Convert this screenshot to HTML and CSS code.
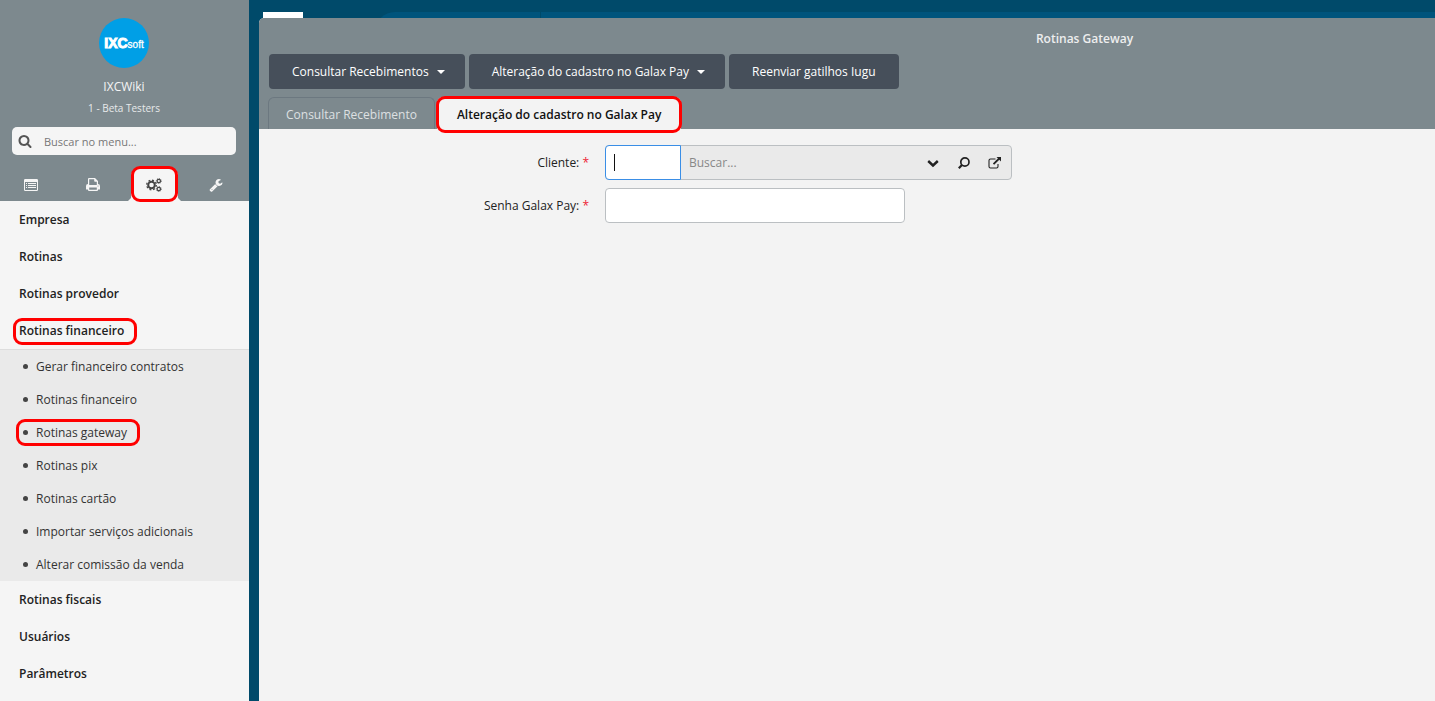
FILE: index.html
```html
<!DOCTYPE html>
<html lang="pt-BR">
<head>
<meta charset="utf-8">
<title>Rotinas Gateway</title>
<link rel="stylesheet" href="styles.css">
</head>
<body>
<div class="app">
  <aside class="sidebar">
    <header class="profile">
      <div class="logo"><span class="logo-main">IXC</span><span class="logo-sub">soft</span></div>
      <div class="user-name">IXCWiki</div>
      <div class="user-org">1 - Beta Testers</div>
      <label class="menu-search">
        <svg width="14" height="14" viewBox="0 0 1792 1792" fill="currentColor" aria-hidden="true"><path d="M1216 832q0-185-131.500-316.500t-316.500-131.500-316.500 131.500-131.500 316.500 131.500 316.500 316.500 131.500 316.500-131.500 131.500-316.500zm512 832q0 52-38 90t-90 38q-54 0-90-38l-343-342q-179 124-399 124-143 0-273.500-55.500t-225-150-150-225-55.500-273.500 55.500-273.500 150-225 225-150 273.500-55.500 273.500 55.500 225 150 150 225 55.500 273.500q0 220-124 399l343 343q37 37 37 90z"/></svg>
        <input type="text" placeholder="Buscar no menu..." aria-label="Buscar no menu">
      </label>
      <nav class="side-tabs">
        <button class="side-tab" aria-label="Cadastros"><svg width="14" height="12" viewBox="0 0 14 12" fill="currentColor"><path fill-rule="evenodd" d="M1.200 0h11.600Q14 0 14 1.200v9.600Q14 12 12.800 12H1.200Q0 12 0 10.800V1.200Q0 0 1.200 0zM1 3v7.500q0 .5.500.5h11q.5 0 .5-.5V3z"/><path d="M2 4h1v1H2zM4 4h8v1H4zM2 6h1v1H2zM4 6h8v1H4zM2 8h1v1H2zM4 8h8v1H4z"/></svg></button>
        <button class="side-tab" aria-label="Imprimir"><svg width="14" height="13" viewBox="0 0 14 13" fill="currentColor"><path fill-rule="evenodd" d="M2 6V1q0-1 1-1h6l3 3v3q2 0 2 2v3.300q0 .2-.3.200H12V12q0 1-1 1H3q-1 0-1-1v-.5H.300Q0 11.500 0 11.300V8q0-2 2-2zM3.200 1.200V7h7.600V3.800H9q-.8 0-.8-.8V1.200zM3.200 9.500v2.300h7.600V9.500zM12 7.500a.5.500 0 1 0 0 1 .5.500 0 1 0 0-1z"/></svg></button>
        <button class="side-tab side-tab-active marked" aria-label="Rotinas"><svg width="16" height="14" viewBox="0 0 16 14" fill="none" stroke="currentColor"><circle cx="5.500" cy="7" r="3.300" stroke-width="2"/><circle cx="5.500" cy="7" r="4.800" stroke-width="1.300" stroke-dasharray="1.900 1.870"/><circle cx="12.800" cy="3" r="1.700" stroke-width="1.200"/><circle cx="12.800" cy="3" r="2.500" stroke-width=".8" stroke-dasharray="1 .960"/><circle cx="12.800" cy="11" r="1.700" stroke-width="1.200"/><circle cx="12.800" cy="11" r="2.500" stroke-width=".8" stroke-dasharray="1 .960"/></svg></button>
        <button class="side-tab" aria-label="Ferramentas"><svg width="14" height="14" viewBox="0 0 1792 1792" fill="currentColor"><path d="M448 1472q0-26-19-45t-45-19-45 19-19 45 19 45 45 19 45-19 19-45zm644-420l-682 682q-37 37-90 37-52 0-91-37l-106-108q-38-36-38-90 0-53 38-91l681-681q39 98 114.500 173.500t173.500 114.500zm634-435q0 39-23 106-47 134-164.500 217.500t-258.500 83.500q-185 0-316.500-131.500t-131.500-316.500 131.500-316.500 316.500-131.500q58 0 121.500 16.500t107.500 46.500q16 11 16 28t-16 28l-293 169v224l193 107q5-3 79-48.500t135.500-81 70.500-35.500q15 0 23.500 10t8.500 25z"/></svg></button>
      </nav>
    </header>
    <nav class="menu">
      <a class="menu-item" href="#">Empresa</a>
      <a class="menu-item" href="#">Rotinas</a>
      <a class="menu-item" href="#">Rotinas provedor</a>
      <a class="menu-item" href="#"><span class="marked marked-group">Rotinas financeiro</span></a>
      <ul class="submenu">
        <li><a href="#">Gerar financeiro contratos</a></li>
        <li><a href="#">Rotinas financeiro</a></li>
        <li><a class="marked marked-sub" href="#">Rotinas gateway</a></li>
        <li><a href="#">Rotinas pix</a></li>
        <li><a href="#">Rotinas cartão</a></li>
        <li><a href="#">Importar serviços adicionais</a></li>
        <li><a href="#">Alterar comissão da venda</a></li>
      </ul>
      <a class="menu-item" href="#">Rotinas fiscais</a>
      <a class="menu-item" href="#">Usuários</a>
      <a class="menu-item" href="#">Parâmetros</a>
    </nav>
  </aside>
  <main class="desk">
    <div class="backdrop"><div class="back-logo"></div><div class="back-bar"><div class="back-cell"></div></div></div>
    <section class="window">
      <header class="window-head">
        <h1 class="window-title">Rotinas Gateway</h1>
        <div class="toolbar">
          <button class="btn">Consultar Recebimentos<span class="caret"></span></button>
          <button class="btn">Alteração do cadastro no Galax Pay<span class="caret"></span></button>
          <button class="btn">Reenviar gatilhos Iugu</button>
        </div>
        <div class="tabs">
          <button class="tab">Consultar Recebimento</button>
          <button class="tab tab-active marked">Alteração do cadastro no Galax Pay</button>
        </div>
      </header>
      <form class="form">
        <div class="row">
          <label class="label" for="cliente">Cliente: <span class="req">*</span></label>
          <div class="lookup">
            <div class="code"><input class="code-input" id="cliente" type="text"><span class="cursor"></span></div>
            <input class="lookup-input" type="text" placeholder="Buscar..." aria-label="Buscar cliente">
            <button class="icon-btn" type="button" aria-label="Abrir lista"><svg width="12" height="12" viewBox="0 0 12 12" fill="none" stroke="currentColor" stroke-width="2.400"><path d="M1.200 4L6 8.500 10.800 4"/></svg></button>
            <button class="icon-btn" type="button" aria-label="Pesquisar"><svg width="12" height="12" viewBox="0 0 12 12" fill="none" stroke="currentColor"><circle cx="6.900" cy="5" r="4.100" stroke-width="1.700"/><path d="M4.200 7.800L.8 11.200" stroke-width="2.200"/></svg></button>
            <button class="icon-btn" type="button" aria-label="Abrir cadastro"><svg width="14" height="12" viewBox="0 0 14 12" fill="none" stroke="currentColor"><path d="M7.500 2H2.500Q1 2 1 3.500v6Q1 11 2.500 11h6Q10 11 10 9.500V7" stroke-width="1.100"/><path d="M5.500 7.200L11.200 1.500" stroke-width="1.800"/><path d="M8.500 0H13v4.500z" fill="currentColor" stroke="none"/></svg></button>
          </div>
        </div>
        <div class="row">
          <label class="label" for="senha">Senha Galax Pay: <span class="req">*</span></label>
          <input class="field" id="senha" type="password">
        </div>
      </form>
    </section>
  </main>
</div>
</body>
</html>
```
FILE: styles.css
```css
* { box-sizing: border-box; }
body { margin: 0; font: 12px/18px "Open Sans", "Noto Sans", sans-serif; color: #222; }
button, input { font: inherit; margin: 0; padding: 0; border: 0; background: none; color: inherit; outline: 0; }
a { color: inherit; text-decoration: none; }
svg { display: block; }
.app { display: flex; min-height: 100vh; background: #004a6a; }

.sidebar { flex: none; width: 249px; background: #f5f5f5; }
.profile { display: flex; flex-direction: column; align-items: center; padding: 18px 1px 0 0; background: #7d898e; color: #f5f5f5; }
.logo { display: flex; align-items: baseline; justify-content: center; width: 50px; height: 50px; border-radius: 50%; background: #009fe6; color: #fff; font-family: "Liberation Sans", Arial, sans-serif; font-weight: 700; line-height: 50px; }
.logo-main { font-size: 14px; -webkit-text-stroke: 1px #fff; }
.logo-sub { font-size: 10px; font-weight: 400; -webkit-text-stroke: 0.3px #fff; }
.user-name { margin-top: 10px; }
.user-org { margin-top: 3px; font-size: 10px; color: #e8eaeb; }
.menu-search { display: flex; align-items: center; gap: 11px; align-self: stretch; height: 28px; margin: 10px 12px 0 12px; padding: 0 7px 0 6px; border-radius: 5px; background: #f5f5f5; color: #555; }
.menu-search input { flex: 1; min-width: 0; padding: 2px 0 0 1px; font-size: 11px; }
.menu-search input::placeholder { color: #777; }
.side-tabs { display: grid; grid-template-columns: repeat(4, 1fr); align-self: stretch; margin-top: 12px; padding-right: 1px; }
.side-tab { display: flex; align-items: center; justify-content: center; height: 34px; padding-top: 1px; }
.side-tab-active { justify-self: center; width: 47px; border-radius: 9px 9px 0 0; background: #f5f5f5; color: #444; }
.side-tab-active::before { content: ""; position: absolute; left: -3px; right: -3px; bottom: 0; border-bottom: 4px solid #f5f5f5; border-left: 4px solid transparent; border-right: 4px solid transparent; }

.marked { position: relative; }
.marked::after { content: ""; position: absolute; inset: -1px 0; border: 3px solid #f00; border-radius: 9px; pointer-events: none; }
.marked-group::after { inset: -4px -13px -5px -6px; }
.marked-sub::after { inset: -5px -13px -4px -20px; }

.menu-item { display: flex; align-items: center; height: 37px; padding: 0 19px; font-weight: 600; }
.submenu { margin: 0; padding: 0; border-top: 1px solid #ddd; background: #eaeaea; list-style: none; color: #333; }
.submenu li { display: flex; align-items: center; gap: 8px; height: 33px; padding-left: 23px; }
.submenu li::before { content: ""; width: 5px; height: 5px; border-radius: 50%; background: #444; }

.desk { display: flex; flex-direction: column; flex: 1; min-width: 0; padding-left: 10px; }
.backdrop { display: flex; height: 18px; padding: 12px 0 0 4px; overflow: hidden; }
.back-logo { width: 40px; background: #fff; }
.back-bar { flex: 1; height: 40px; margin-left: 72px; border-radius: 20px 0 0 20px; background: #00547c; }
.back-cell { width: 166px; height: 40px; border-right: 1px solid #004a6a; }
.window { flex: 1; border-radius: 5px 0 0 0; background: #f3f3f3; overflow: hidden; }
.window-head { background: #7d898e; }
.window-title { margin: 0; padding: 12px 0 6px 475px; text-align: center; font-size: 12px; line-height: 18px; font-weight: 600; color: #eee; }
.toolbar { display: flex; gap: 4px; padding: 0 10px; }
.btn { display: flex; align-items: center; gap: 8px; height: 35px; padding: 0 23px; border-radius: 4px; background: #464f5a; color: #fff; font-weight: 500; white-space: nowrap; }
.caret { border: 4px solid transparent; border-top-color: #fff; border-bottom: 0; }
.btn:has(.caret) { padding-right: 20px; }
.tabs { display: flex; align-items: flex-end; gap: 2px; padding: 8px 9px 0; }
.tab { height: 32px; padding: 2px 17px 0; border: 1px solid #6c7880; border-bottom: 0; border-radius: 6px 6px 0 0; color: #dde0e2; white-space: nowrap; }
.tab-active { padding: 2px 19px 0; border-color: #f3f3f3; background: #f3f3f3; color: #111; font-weight: 600; }
.tab-active::after { inset: -2px -2px -4px; }
.form { display: flex; flex-direction: column; gap: 8px; padding: 16px 0 16px 1px; }
.row { display: flex; align-items: center; gap: 16px; }
.label { width: 28%; min-width: 120px; text-align: right; }
.req { color: #e23; }
.lookup { display: flex; width: 407px; height: 35px; border: 1px solid #bbbfc2; border-radius: 4px; background: #eaeaea; }
.code { position: relative; flex: none; width: 76px; margin: -1px 0 -1px -1px; }
.code-input { width: 100%; height: 35px; padding: 0 8px; border: 1px solid #3a8ee6; border-radius: 4px 0 0 4px; background: #fff; }
.cursor { position: absolute; left: 9px; top: 9px; width: 1px; height: 17px; background: #111; }
.lookup-input { flex: 1; min-width: 0; padding: 0 8px; }
.lookup-input::placeholder { color: #888; }
.icon-btn { display: flex; align-items: center; justify-content: center; width: 31px; }
.icon-btn:last-child { margin-right: 1px; }
.field { width: 300px; height: 35px; padding: 0 8px; border: 1px solid #bbbfc2; border-radius: 4px; background: #fff; }
```
